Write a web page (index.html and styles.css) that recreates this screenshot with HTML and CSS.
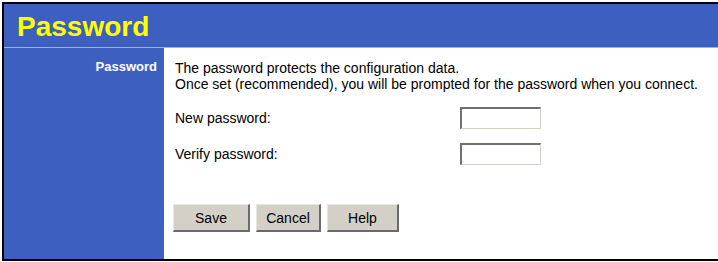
FILE: index.html
```html
<!DOCTYPE html>
<html>
<head>
<meta charset="utf-8">
<link rel="stylesheet" href="styles.css">
</head>
<body>
<div class="frame">
  <div class="header"><h1 class="title">Password</h1></div>
  <div class="main">
    <div class="side"><span class="side-label">Password</span></div>
    <div class="content">
      <p class="intro">The password protects the configuration data.<br>Once set (recommended), you will be prompted for the password when you connect.</p>
      <div class="field"><span class="label">New password:</span><span class="input"></span></div>
      <div class="field"><span class="label">Verify password:</span><span class="input"></span></div>
      <div class="buttons">
        <span class="btn btn-save">Save</span>
        <span class="btn btn-cancel">Cancel</span>
        <span class="btn btn-help">Help</span>
      </div>
    </div>
  </div>
</div>
</body>
</html>
```
FILE: styles.css
```css
html, body { margin: 0; padding: 0; background: #fff; }
body { font-family: "Liberation Sans", Arial, sans-serif; width: 718px; height: 262px; overflow: hidden; }
.frame {
  margin: 2px 0 0 2px;
  width: 730px;
  border-top: 2px solid #000;
  border-left: 2px solid #000;
  border-bottom: 2px solid #000;
  height: 255px;
  display: flex;
  flex-direction: column;
}
.header {
  background: #3d5fc0;
  height: 44px;
  border-bottom: 1px solid #9fb0e6;
  box-sizing: border-box;
  display: flex;
  align-items: center;
}
.title {
  margin: 0 0 0 13px;
  color: #ffff00;
  font-size: 28px;
  font-weight: bold;
  line-height: 32px;
  padding-top: 2px;
}
.main { flex: 1; display: flex; }
.side {
  width: 160px;
  background: #3d5fc0;
  display: flex;
  justify-content: flex-end;
  padding: 11px 7px 0 0;
  box-sizing: border-box;
}
.side-label { color: #fff; font-weight: bold; font-size: 13px; line-height: 16px; }
.content { flex: 1; padding: 12px 0 0 11px; font-size: 14px; color: #000; }
.intro { margin: 0; line-height: 16px; font-size: 14px; }
.field { display: flex; align-items: center; height: 22px; margin-top: 15px; }
.field + .field { margin-top: 14px; }
.label { width: 285px; }
.input {
  width: 81px; height: 22px; box-sizing: border-box;
  border-top: 2px solid #707070;
  border-left: 2px solid #707070;
  border-right: 1px solid #d4d0c8;
  border-bottom: 1px solid #d4d0c8;
  background: #fff;
}
.buttons { display: flex; gap: 6px; margin-top: 39px; margin-left: -2px; }
.btn {
  height: 28px; box-sizing: border-box;
  background: #d4d0c8;
  border-top: 1px solid #e8e6e0;
  border-left: 1px solid #e8e6e0;
  border-right: 2px solid #6a6a6a;
  border-bottom: 2px solid #6a6a6a;
  display: flex; align-items: center; justify-content: center;
  font-size: 14px;
}
.btn-save { width: 77px; }
.btn-cancel { width: 65px; }
.btn-help { width: 72px; }
```
